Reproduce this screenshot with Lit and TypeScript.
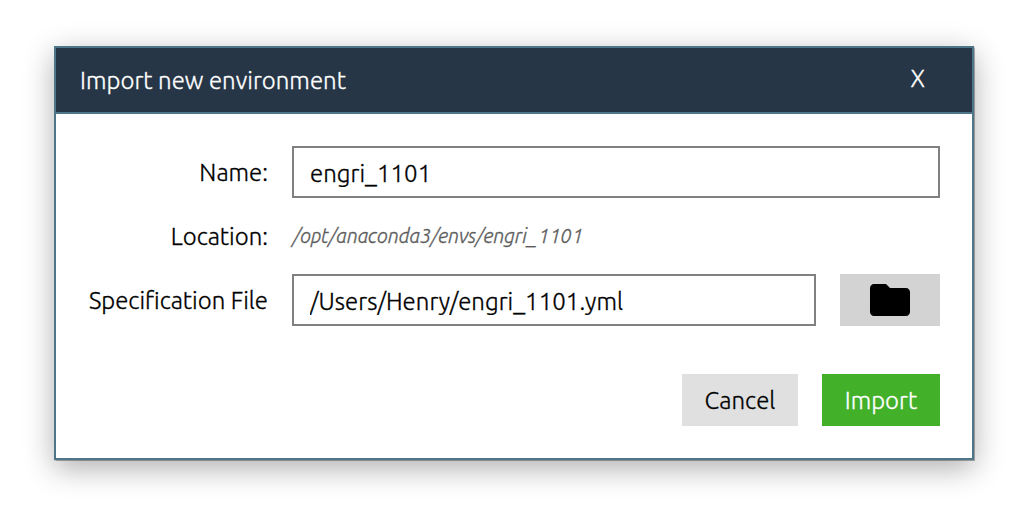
import { LitElement, html, css } from "lit";
import { customElement, state } from "lit/decorators.js";

@customElement("app-root")
export class AppRoot extends LitElement {
  static styles = css`
    :host { display: block; box-sizing: border-box; width: 1028px; height: 522px; padding: 46px 54px 62px; background: #fff; overflow: hidden;
      font-family: Ubuntu, "Open Sans", "Noto Sans", sans-serif; font-weight: 300; font-size: 24px; line-height: 28px; letter-spacing: 0.03px; color: #000; -webkit-text-stroke: 0.3px currentColor; }
    * { box-sizing: border-box; }
    .dialog { width: 920px; height: 414px; border: 2px solid #4e7588; background: #fff;
      box-shadow: 0 0 1px 0.5px rgba(0, 0, 0, 0.3), 0 8px 28px rgba(0, 0, 0, 0.32); }
    .header { display: flex; justify-content: space-between; height: 66px; padding: 19px 47px 0 24px; background: #263646; color: #fff; border-bottom: 2px solid #4e7588; }
    .close { margin-top: -2px; }
    .body { display: grid; grid-template-columns: 212px 524px 100px; column-gap: 24px; padding: 32px 32px 0 0; grid-template-rows: 52px 76px 52px; align-items: center; }
    .label { padding-top: 2px; text-align: right; letter-spacing: normal; white-space: nowrap; }
    .field { display: block; width: 100%; height: 52px; border: 2px solid #808080; padding: 2px 16px 0; margin: 0; font: inherit; letter-spacing: inherit; line-height: 40px; color: #000; background: #fff; border-radius: 0; outline: none; -webkit-text-stroke: inherit; }
    .wide { grid-column: 2 / 4; }
    .location { display: block; padding-left: 1px; font-style: italic; font-size: 20px; letter-spacing: -0.07px; color: #5c5c5c; white-space: nowrap; }
    button { font: inherit; letter-spacing: inherit; border: 0; height: 52px; padding: 2px 0 0; border-radius: 0; }
    .browse { display: flex; align-items: center; justify-content: center; width: 100px; padding: 0; background: #d3d3d3; }
    .actions { display: flex; justify-content: flex-end; gap: 24px; padding: 48px 32px 0 0; }
    .cancel { width: 116px; background: #e0e0e0; color: #000; }
    .import { width: 118px; background: #43b02a; color: #fff; }
    svg { display: block; }
  `;

  @state() name = "engri_1101";
  @state() file = "/Users/Henry/engri_1101.yml";

  render() {
    return html`
      <div class="dialog">
        <div class="header"><span class="title">Import new environment</span><span class="close">X</span></div>
        <div class="body">
          <div class="label">Name:</div>
          <div class="wide"><input class="field" .value=${this.name} /></div>
          <div class="label">Location:</div>
          <div class="wide"><span class="location">/opt/anaconda3/envs/${this.name}</span></div>
          <div class="label">Specification File</div>
          <div><input class="field" .value=${this.file} /></div>
          <button class="browse" aria-label="Browse">
            <svg width="48" height="48" viewBox="0 0 24 24"><path d="M10 4H4c-1.1 0-1.99.9-1.99 2L2 18c0 1.1.9 2 2 2h16c1.1 0 2-.9 2-2V8c0-1.1-.9-2-2-2h-8l-2-2z" /></svg>
          </button>
        </div>
        <div class="actions">
          <button class="cancel">Cancel</button>
          <button class="import">Import</button>
        </div>
      </div>
    `;
  }
}
